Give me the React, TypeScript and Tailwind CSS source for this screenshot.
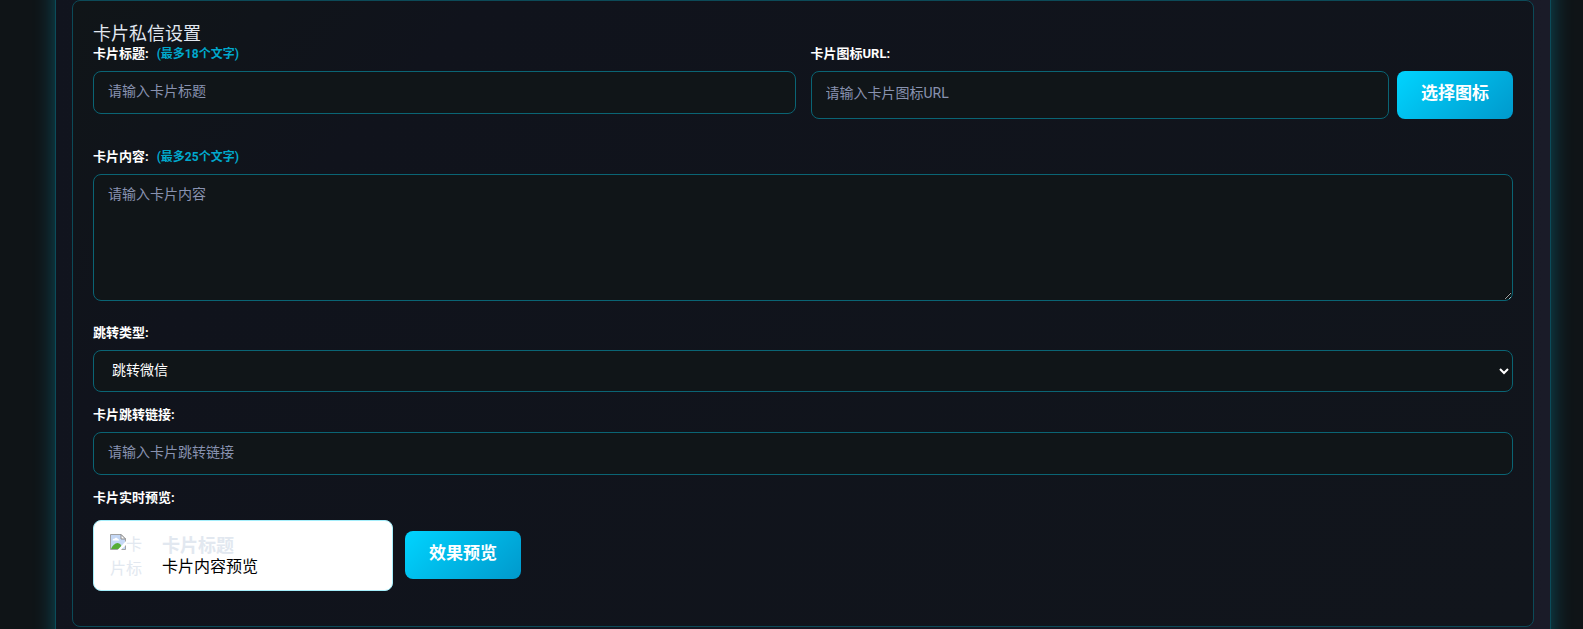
import React from 'react';

const fieldClass =
  'w-full rounded-lg border border-[#0a6474] bg-[#101518] px-3.5 text-sm text-white placeholder:text-[#8892b0] outline-none focus:border-[#00d4ff]';

const actionClass =
  'h-12 shrink-0 rounded-lg bg-linear-135 from-[#00d4ff] to-[#0099cc] px-6 pb-0.5 text-[17px] font-bold text-white';

type FieldLabelProps = {
  htmlFor: string;
  children: React.ReactNode;
  hint?: string;
};

function FieldLabel({ htmlFor, children, hint }: FieldLabelProps) {
  return (
    <label htmlFor={htmlFor} className="mb-[7px] block pt-px text-[13px] leading-5 font-bold text-white">
      {children}
      {hint && <span className="ml-2 text-xs leading-4 text-[#00a8cc]">{hint}</span>}
    </label>
  );
}

function BrokenImageIcon() {
  return (
    <svg viewBox="0 0 16 16" className="inline-block size-4 align-baseline" aria-hidden="true">
      <path d="M0.5 0.5h10.500l4.500 4.500v10.500h-15z" fill="#c5d8f6" stroke="#a3a3a3" />
      <path d="M11 0.5v4.500h4.500z" fill="#fff" stroke="#8d8d8d" />
      <path d="M2.500 6.500c0-1.200 1-1.800 2-1.600.4-1.400 2.800-1.400 3.200 0 1.200 0 1.600.8 1.600 1.600z" fill="#fff" />
      <path d="M1 15c1.500-3.500 4-6 6.500-6s4 2 5 6z" fill="#55ad36" />
      <path d="M16 7L7.500 16H11l5-5z" fill="#fff" />
    </svg>
  );
}

function CardPreview() {
  return (
    <div className="flex h-[71px] w-[300px] items-start rounded-lg border border-[#a5eefb] bg-white px-4 py-3">
      <div className="h-12 w-9 shrink-0 text-base leading-6 text-[#e2e8f0]">
        <BrokenImageIcon />
        卡片标
      </div>
      <div className="ml-4 min-w-0 pt-0.5">
        <div className="text-lg leading-[22px] font-bold text-[#e2e8f0]">卡片标题</div>
        <div className="text-base leading-5 text-black">卡片内容预览</div>
      </div>
    </div>
  );
}

export default function App() {
  const [title, setTitle] = React.useState('');
  const [iconUrl, setIconUrl] = React.useState('');
  const [content, setContent] = React.useState('');
  const [jumpType, setJumpType] = React.useState('wechat');
  const [link, setLink] = React.useState('');

  return (
    <div className="min-h-screen overflow-hidden bg-[#0f1417] px-8 font-['Liberation_Sans_Narrow','Roboto','Noto_Sans_CJK_SC',sans-serif] lg:pr-8 lg:pl-[55px]">
      <main className="-my-10 border-x border-[#0b4c5a] bg-linear-90 from-[#11141e] to-[#1a1b28] px-4 py-10 shadow-[0_0_20px_rgba(0,212,255,0.3)]">
        <section className="rounded-lg border border-[#0c4a58] bg-linear-135 from-[#101518] via-[#10131c] via-20% to-[#11151c] px-5 pt-6 pb-[35px]">
          <h2 className="text-lg leading-[18px] text-[#e2e8f0]">卡片私信设置</h2>

          <div className="grid grid-cols-2 items-start gap-[15px]">
            <div>
              <FieldLabel htmlFor="card-title" hint="(最多18个文字)">卡片标题:</FieldLabel>
              <input
                id="card-title"
                type="text"
                maxLength={18}
                value={title}
                onChange={(e) => setTitle(e.target.value)}
                placeholder="请输入卡片标题"
                className={`${fieldClass} block h-[43px] pb-1`}
              />
            </div>
            <div>
              <FieldLabel htmlFor="card-icon">卡片图标URL:</FieldLabel>
              <div className="flex gap-2">
                <input
                  id="card-icon"
                  type="text"
                  value={iconUrl}
                  onChange={(e) => setIconUrl(e.target.value)}
                  placeholder="请输入卡片图标URL"
                  className={`${fieldClass} h-12 min-w-0 flex-1 pb-1`}
                />
                <button type="button" className={actionClass}>选择图标</button>
              </div>
            </div>
          </div>

          <div className="mt-[27px]">
            <FieldLabel htmlFor="card-content" hint="(最多25个文字)">卡片内容:</FieldLabel>
            <textarea
              id="card-content"
              maxLength={25}
              value={content}
              onChange={(e) => setContent(e.target.value)}
              placeholder="请输入卡片内容"
              className={`${fieldClass} block h-[127px] resize-y py-[9px]`}
            />
          </div>

          <div className="mt-[21px]">
            <FieldLabel htmlFor="jump-type">跳转类型:</FieldLabel>
            <select
              id="jump-type"
              value={jumpType}
              onChange={(e) => setJumpType(e.target.value)}
              className={`${fieldClass} block h-[42px] pr-0 pb-0.5`}
            >
              <option value="wechat">跳转微信</option>
              <option value="link">跳转链接</option>
            </select>
          </div>

          <div className="mt-3">
            <FieldLabel htmlFor="card-link">卡片跳转链接:</FieldLabel>
            <input
              id="card-link"
              type="text"
              value={link}
              onChange={(e) => setLink(e.target.value)}
              placeholder="请输入卡片跳转链接"
              className={`${fieldClass} block h-[43px] pb-1`}
            />
          </div>

          <div className="mt-[13px]">
            <div className="mb-3 text-[13px] leading-5 font-bold text-white">卡片实时预览:</div>
            <div className="flex items-start gap-3">
              <CardPreview />
              <button type="button" className={`${actionClass} mt-[11px]`}>效果预览</button>
            </div>
          </div>
        </section>
      </main>
    </div>
  );
}
